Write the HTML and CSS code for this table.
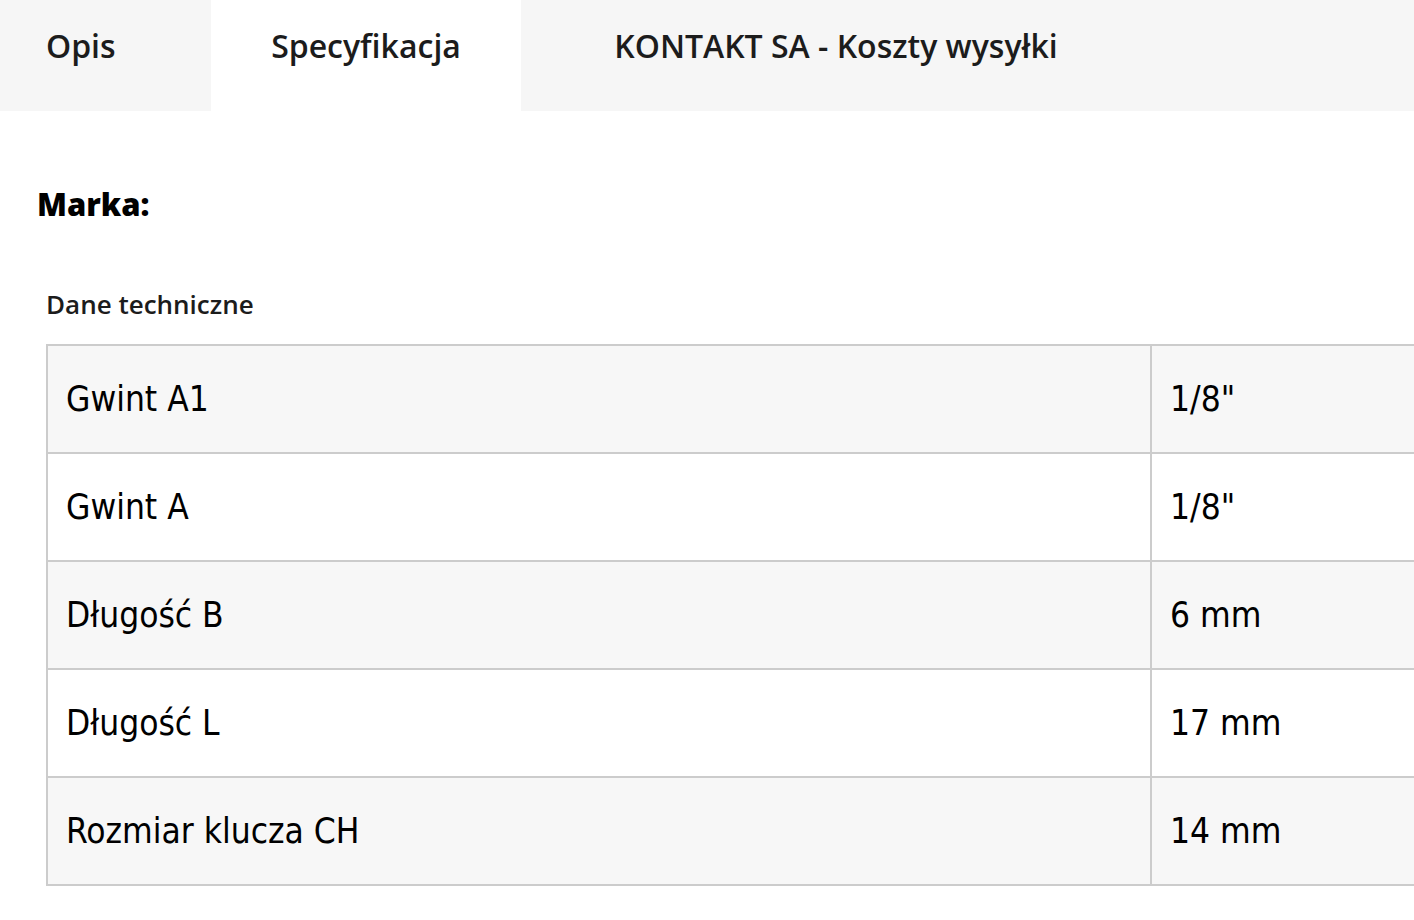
FILE: index.html
```html
<!DOCTYPE html>
<html lang="pl">
<head>
<meta charset="utf-8">
<title>Specyfikacja</title>
<link rel="stylesheet" href="styles.css">
</head>
<body>
<div class="tabs">
  <div class="tab tab-opis">Opis</div>
  <div class="tab tab-spec active">Specyfikacja</div>
  <div class="tab tab-kontakt">KONTAKT SA - Koszty wysyłki</div>
</div>
<div class="content">
  <div class="brand">Marka:</div>
  <div class="section-title">Dane techniczne</div>
  <table class="spec">
    <tr><td class="name">Gwint A1</td><td class="val">1/8"</td></tr>
    <tr><td class="name">Gwint A</td><td class="val">1/8"</td></tr>
    <tr><td class="name">Długość B</td><td class="val">6 mm</td></tr>
    <tr><td class="name">Długość L</td><td class="val">17 mm</td></tr>
    <tr><td class="name">Rozmiar klucza CH</td><td class="val">14 mm</td></tr>
  </table>
</div>
</body>
</html>
```
FILE: styles.css
```css
html, body {
  margin: 0;
  padding: 0;
  background: #ffffff;
  overflow: hidden;
}
body {
  font-family: "Open Sans", "Noto Sans", sans-serif;
  color: #1a1a1a;
  width: 1414px;
}
.tabs {
  display: flex;
  height: 111px;
  background: #f6f6f6;
}
.tab {
  box-sizing: border-box;
  height: 111px;
  padding-top: 24px;
  font-size: 32px;
  font-weight: 600;
  line-height: 44px;
  color: #1c1c1c;
  white-space: nowrap;
}
.tab-opis {
  width: 211px;
  padding-left: 46px;
}
.tab-spec {
  width: 310px;
  text-align: center;
  background: #ffffff;
}
.tab-kontakt {
  width: 630px;
  text-align: center;
}
.content {
  padding: 0 0 0 46px;
}
.brand {
  margin-left: -9px;
  padding-top: 71px;
  font-size: 31px;
  font-weight: 800;
  line-height: 44px;
  color: #000;
}
.section-title {
  padding-top: 61px;
  font-size: 26px;
  font-weight: 600;
  line-height: 34px;
  color: #1c1c1c;
}
.spec {
  margin-top: 23px;
  border-collapse: collapse;
  width: 1500px;
  font-family: "DejaVu Sans", "Verdana", sans-serif;
  font-stretch: condensed;
  font-size: 35px;
  color: #000;
}
.spec tr:nth-child(odd) {
  background: #f7f7f7;
}
.spec tr:nth-child(even) {
  background: #ffffff;
}
.spec td {
  border: 2px solid #cccccc;
  height: 108px;
  box-sizing: border-box;
  padding: 0 18px;
  vertical-align: middle;
}
.spec td.name {
  width: 1104px;
}
```
